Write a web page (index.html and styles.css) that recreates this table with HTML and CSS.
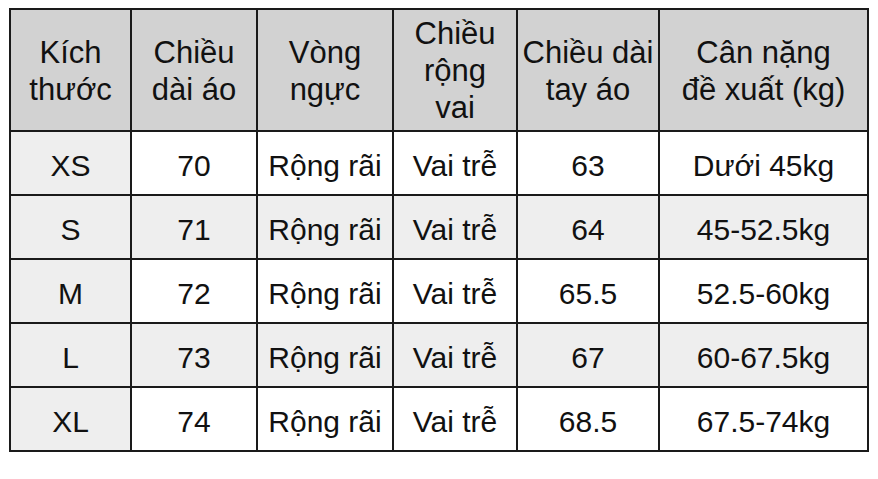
FILE: index.html
```html
<!DOCTYPE html>
<html lang="vi">
<head>
<meta charset="utf-8">
<title>Bảng size</title>
<link rel="stylesheet" href="styles.css">
</head>
<body>
<table class="size-table">
  <colgroup>
    <col class="c1"><col class="c2"><col class="c3"><col class="c4"><col class="c5"><col class="c6">
  </colgroup>
  <thead>
    <tr>
      <th>Kích<br>thước</th>
      <th>Chiều<br>dài áo</th>
      <th>Vòng<br>ngực</th>
      <th>Chiều<br>rộng<br>vai</th>
      <th>Chiều dài<br>tay áo</th>
      <th>Cân nặng<br>đề xuất (kg)</th>
    </tr>
  </thead>
  <tbody>
    <tr><td class="size">XS</td><td>70</td><td>Rộng rãi</td><td>Vai trễ</td><td>63</td><td>Dưới 45kg</td></tr>
    <tr class="alt"><td class="size">S</td><td>71</td><td>Rộng rãi</td><td>Vai trễ</td><td>64</td><td>45-52.5kg</td></tr>
    <tr><td class="size">M</td><td>72</td><td>Rộng rãi</td><td>Vai trễ</td><td>65.5</td><td>52.5-60kg</td></tr>
    <tr class="alt"><td class="size">L</td><td>73</td><td>Rộng rãi</td><td>Vai trễ</td><td>67</td><td>60-67.5kg</td></tr>
    <tr><td class="size">XL</td><td>74</td><td>Rộng rãi</td><td>Vai trễ</td><td>68.5</td><td>67.5-74kg</td></tr>
  </tbody>
</table>
</body>
</html>
```

FILE: styles.css
```css
html, body {
  margin: 0;
  padding: 0;
  background: #ffffff;
}

body {
  padding: 8px 0 0 9px;
  font-family: "Liberation Sans", Arial, sans-serif;
  color: #111111;
}

.size-table {
  border-collapse: collapse;
  table-layout: fixed;
  width: 858px;
}

.c1 { width: 121px; }
.c2 { width: 126px; }
.c3 { width: 136px; }
.c4 { width: 124px; }
.c5 { width: 142px; }
.c6 { width: 209px; }

.size-table th,
.size-table td {
  border: 2px solid #1a1a1a;
  text-align: center;
  vertical-align: middle;
  padding: 0;
  white-space: nowrap;
}

.size-table th {
  background: #d2d2d2;
  font-weight: normal;
  font-size: 31px;
  line-height: 37px;
  height: 122px;
  padding-top: 1px;
  box-sizing: border-box;
}

.size-table td {
  background: #ffffff;
  font-size: 30px;
  height: 64px;
  padding-top: 5px;
  box-sizing: border-box;
}

.size-table tr.alt td,
.size-table td.size {
  background: #eeeeee;
}
```
